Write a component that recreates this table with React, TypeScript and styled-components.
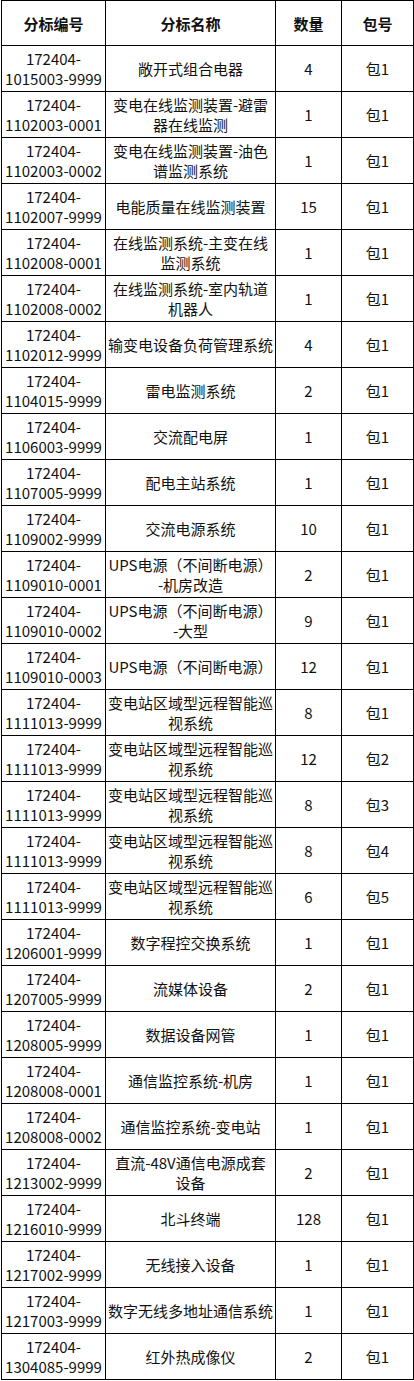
import React, { FC } from 'react';
import styled, { createGlobalStyle } from 'styled-components';

type Row = {
  code: string;
  name: string[];
  qty: number;
  pkg: string;
};

const GlobalStyle = createGlobalStyle`
  html, body {
    margin: 0;
    padding: 0;
    background: #ffffff;
  }
  body {
    font-family: "Noto Sans CJK SC", "Noto Sans", sans-serif;
    color: #000000;
  }
`;

const Table = styled.div`
  margin-left: 1px;
  width: 413px;
  box-sizing: border-box;
  display: grid;
  grid-template-columns: 104px 170px 66px 72px;
  border-left: 1px solid #000;
  border-top: 1px solid #000;
`;

const Cell = styled.div<{ head?: boolean }>`
  box-sizing: border-box;
  height: ${(props) => (props.head ? 45 : 46)}px;
  border-right: 1px solid #000;
  border-bottom: 1px solid #000;
  display: flex;
  align-items: center;
  justify-content: center;
  text-align: center;
  padding: ${(props) => (props.head ? '2px 0 0' : '1px 1px 0')};
  font-size: 15px;
  line-height: 20px;
  font-weight: ${(props) => (props.head ? 700 : 400)};
  white-space: nowrap;
  color: #111;
`;

const rows: Row[] = [
  { code: '1015003-9999', name: ['敞开式组合电器'], qty: 4, pkg: '包1' },
  { code: '1102003-0001', name: ['变电在线监测装置-避雷', '器在线监测'], qty: 1, pkg: '包1' },
  { code: '1102003-0002', name: ['变电在线监测装置-油色', '谱监测系统'], qty: 1, pkg: '包1' },
  { code: '1102007-9999', name: ['电能质量在线监测装置'], qty: 15, pkg: '包1' },
  { code: '1102008-0001', name: ['在线监测系统-主变在线', '监测系统'], qty: 1, pkg: '包1' },
  { code: '1102008-0002', name: ['在线监测系统-室内轨道', '机器人'], qty: 1, pkg: '包1' },
  { code: '1102012-9999', name: ['输变电设备负荷管理系统'], qty: 4, pkg: '包1' },
  { code: '1104015-9999', name: ['雷电监测系统'], qty: 2, pkg: '包1' },
  { code: '1106003-9999', name: ['交流配电屏'], qty: 1, pkg: '包1' },
  { code: '1107005-9999', name: ['配电主站系统'], qty: 1, pkg: '包1' },
  { code: '1109002-9999', name: ['交流电源系统'], qty: 10, pkg: '包1' },
  { code: '1109010-0001', name: ['UPS电源（不间断电源）', '-机房改造'], qty: 2, pkg: '包1' },
  { code: '1109010-0002', name: ['UPS电源（不间断电源）', '-大型'], qty: 9, pkg: '包1' },
  { code: '1109010-0003', name: ['UPS电源（不间断电源）'], qty: 12, pkg: '包1' },
  { code: '1111013-9999', name: ['变电站区域型远程智能巡', '视系统'], qty: 8, pkg: '包1' },
  { code: '1111013-9999', name: ['变电站区域型远程智能巡', '视系统'], qty: 12, pkg: '包2' },
  { code: '1111013-9999', name: ['变电站区域型远程智能巡', '视系统'], qty: 8, pkg: '包3' },
  { code: '1111013-9999', name: ['变电站区域型远程智能巡', '视系统'], qty: 8, pkg: '包4' },
  { code: '1111013-9999', name: ['变电站区域型远程智能巡', '视系统'], qty: 6, pkg: '包5' },
  { code: '1206001-9999', name: ['数字程控交换系统'], qty: 1, pkg: '包1' },
  { code: '1207005-9999', name: ['流媒体设备'], qty: 2, pkg: '包1' },
  { code: '1208005-9999', name: ['数据设备网管'], qty: 1, pkg: '包1' },
  { code: '1208008-0001', name: ['通信监控系统-机房'], qty: 1, pkg: '包1' },
  { code: '1208008-0002', name: ['通信监控系统-变电站'], qty: 1, pkg: '包1' },
  { code: '1213002-9999', name: ['直流-48V通信电源成套', '设备'], qty: 2, pkg: '包1' },
  { code: '1216010-9999', name: ['北斗终端'], qty: 128, pkg: '包1' },
  { code: '1217002-9999', name: ['无线接入设备'], qty: 1, pkg: '包1' },
  { code: '1217003-9999', name: ['数字无线多地址通信系统'], qty: 1, pkg: '包1' },
  { code: '1304085-9999', name: ['红外热成像仪'], qty: 2, pkg: '包1' },
];

const Lines: FC<{ lines: string[] }> = ({ lines }) => (
  <span>
    {lines.map((line, i) => (
      <React.Fragment key={i}>
        {i > 0 && <br />}
        {line}
      </React.Fragment>
    ))}
  </span>
);

const App: FC = () => {
  return (
    <>
      <GlobalStyle />
      <Table>
        <Cell head>分标编号</Cell>
        <Cell head>分标名称</Cell>
        <Cell head>数量</Cell>
        <Cell head>包号</Cell>
        {rows.map((row, i) => (
          <React.Fragment key={i}>
            <Cell>
              <Lines lines={['172404-', row.code]} />
            </Cell>
            <Cell>
              <Lines lines={row.name} />
            </Cell>
            <Cell>{row.qty}</Cell>
            <Cell>{row.pkg}</Cell>
          </React.Fragment>
        ))}
      </Table>
    </>
  );
};

export default App;
